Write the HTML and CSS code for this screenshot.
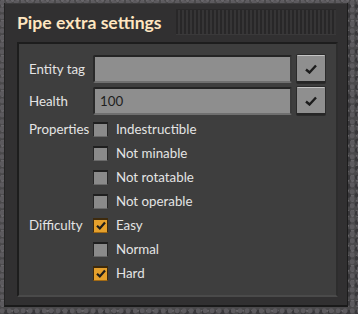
FILE: index.html
```html
<!DOCTYPE html>
<html lang="en">
<head>
    <meta charset="UTF-8">
    <title>Pipe extra settings</title>
    <link rel="stylesheet" href="styles.css">
</head>
<body>
    <div class="frame">
        <div class="titlebar">
            <h1>Pipe extra settings</h1>
            <div class="filler"></div>
        </div>

        <div class="panel">
            <div class="row">
                <span class="label">Entity tag</span>
                <div class="field"><input type="text" class="textfield" value=""></div>
                <button class="confirm">
                    <svg width="12" height="10" viewBox="0 0 12 10"><path d="M1 5.5 L4.5 8.5 L11 1.5" fill="none" stroke="#1c1c1c" stroke-width="2.4"/></svg>
                </button>
            </div>
            <div class="row">
                <span class="label">Health</span>
                <div class="field"><input type="text" class="textfield" value="100"></div>
                <button class="confirm">
                    <svg width="12" height="10" viewBox="0 0 12 10"><path d="M1 5.5 L4.5 8.5 L11 1.5" fill="none" stroke="#1c1c1c" stroke-width="2.4"/></svg>
                </button>
            </div>

            <div class="group">
                <span class="label">Properties</span>
                <div class="options">
                    <label class="check"><span class="box"></span>Indestructible</label>
                    <label class="check"><span class="box"></span>Not minable</label>
                    <label class="check"><span class="box"></span>Not rotatable</label>
                    <label class="check"><span class="box"></span>Not operable</label>
                </div>
            </div>

            <div class="group">
                <span class="label">Difficulty</span>
                <div class="options">
                    <label class="check"><span class="box checked"><svg width="10" height="9" viewBox="0 0 10 9"><path d="M1 4.8 L3.8 7.4 L9 1.5" fill="none" stroke="#1c1c1c" stroke-width="2.2"/></svg></span>Easy</label>
                    <label class="check"><span class="box"></span>Normal</label>
                    <label class="check"><span class="box checked"><svg width="10" height="9" viewBox="0 0 10 9"><path d="M1 4.8 L3.8 7.4 L9 1.5" fill="none" stroke="#1c1c1c" stroke-width="2.2"/></svg></span>Hard</label>
                </div>
            </div>
        </div>
    </div>
</body>
</html>
```

FILE: styles.css
```css
body {
    margin: 0;
    width: 358px;
    height: 314px;
    overflow: hidden;
    font-family: Lato, 'Open Sans', sans-serif;
    background-color: #4a494b;
    background-image:
        radial-gradient(circle at 30% 40%, #5c5a5e 0 2px, transparent 3px),
        radial-gradient(circle at 70% 70%, #38373a 0 2px, transparent 3px),
        radial-gradient(circle at 50% 10%, #68666a 0 1px, transparent 2px);
    background-size: 7px 7px, 9px 9px, 5px 5px;
}
.frame {
    margin: 3px 0 0 4px;
    width: 344px;
    height: 304px;
    box-sizing: border-box;
    background-color: #313031;
    border-left: 1px solid #232323;
    border-right: 1px solid #1c1c1c;
    border-bottom: 2px solid #1a1a1a;
    box-shadow: inset 0 1px 0 #3d3c3d;
    padding: 7px 9px 9px 12px;
}
.titlebar {
    display: flex;
    align-items: center;
    height: 24px;
    gap: 14px;
}
h1 {
    margin: 0;
    font-size: 17.6px;
    font-weight: bold;
    color: #ffe6c0;
    white-space: nowrap;
}
.filler {
    flex: 1;
    height: 24px;
    margin-right: 2px;
    background-color: #333233;
    background-image: repeating-linear-gradient(90deg, #282728 0 2px, #363536 2px 4px);
    border-top: 1px solid #2a292a;
    border-bottom: 1px solid #3a393a;
}
.panel {
    margin-top: 8px;
    height: 255px;
    box-sizing: border-box;
    background-color: #3e3e3e;
    border-top: 2px solid #1d1d1d;
    border-left: 2px solid #1d1d1d;
    border-bottom: 2px solid #4a4a4a;
    border-right: 2px solid #2d2d2d;
    padding: 11px 11px 0 10px;
    color: #e4e4e4;
    font-size: 13.3px;
}
.row {
    display: flex;
    align-items: center;
    height: 28px;
    margin-bottom: 4px;
}
.row + .row {
    margin-bottom: 2px;
}
.label {
    width: 64px;
    flex-shrink: 0;
    white-space: nowrap;
}
.field {
    flex: 1;
}
.textfield {
    display: block;
    width: 100%;
    height: 28px;
    box-sizing: border-box;
    background-color: #8e8e8e;
    border: none;
    border-top: 2px solid #242424;
    border-left: 2px solid #2a2a2a;
    border-right: 2px solid #3a3a3a;
    border-bottom: 2px solid #6f6f6f;
    border-radius: 2px;
    padding: 0 5px;
    font-family: inherit;
    font-size: 13.3px;
    color: #1e1e1e;
}
.confirm {
    width: 28px;
    height: 28px;
    margin-left: 5px;
    padding: 0;
    display: flex;
    align-items: center;
    justify-content: center;
    background-color: #8f8f8f;
    border: none;
    border-top: 1px solid #c4c4c4;
    border-bottom: 2px solid #262626;
    border-radius: 1px;
    box-shadow: 0 0 0 1px #2b2b2b;
}
.group {
    display: flex;
}
.group .label {
    line-height: 24px;
}
.options {
    display: flex;
    flex-direction: column;
}
.check {
    display: flex;
    align-items: center;
    height: 24px;
    gap: 8px;
    white-space: nowrap;
}
.box {
    width: 15px;
    height: 15px;
    box-sizing: border-box;
    display: flex;
    align-items: center;
    justify-content: center;
    background-color: #8a8a8a;
    border: 1px solid #262626;
    border-top: 2px solid #1f1f1f;
    border-bottom: 1px solid #6a6a6a;
}
.box.checked {
    background-color: #e5a02c;
    border-color: #3e2a0c;
    border-bottom-color: #a26a14;
}
```
